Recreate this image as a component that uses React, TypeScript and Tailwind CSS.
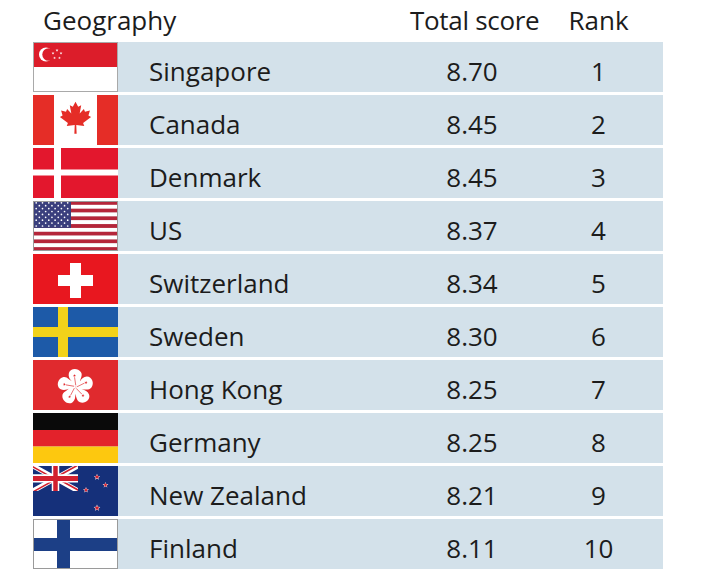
import React from "react"

const starPoints = (cx: number, cy: number, R: number, r: number, rot = -90) => {
    const pts: string[] = []
    for (let i = 0; i < 10; i++) {
        const rad = i % 2 === 0 ? R : r
        const a = ((rot + i * 36) * Math.PI) / 180
        pts.push(`${(cx + rad * Math.cos(a)).toFixed(2)},${(cy + rad * Math.sin(a)).toFixed(2)}`)
    }
    return pts.join(" ")
}

const box = "block w-[85px] h-[50px]"

function Singapore() {
    const stars = [0, 1, 2, 3, 4].map((i) => {
        const a = ((-90 + i * 72) * Math.PI) / 180
        return [24 + 4.2 * Math.cos(a), 12.5 + 4.2 * Math.sin(a)]
    })
    return (
        <svg viewBox="0 0 85 50" className={box} preserveAspectRatio="none">
            <rect width="85" height="50" fill="#fff" />
            <rect width="85" height="25" fill="#dc1d2a" />
            <circle cx="13" cy="12.5" r="7" fill="#fff" />
            <circle cx="15.6" cy="12.5" r="6.3" fill="#dc1d2a" />
            {stars.map(([x, y], i) => (
                <polygon key={i} points={starPoints(x, y, 1.5, 0.6)} fill="#fff" />
            ))}
            <rect x="0.5" y="0.5" width="84" height="49" fill="none" stroke="#a9a9a9" strokeWidth="1" />
        </svg>
    )
}

function Canada() {
    const leaf =
        "50,6 57,19 65,15 61,37 72,25 75,32 88,29 84,42 91,46 70,62 73,70 52,67 53,90 47,90 48,67 27,70 30,62 9,46 16,42 12,29 25,32 28,25 39,37 35,15 43,19"
    return (
        <svg viewBox="0 0 85 50" className={box} preserveAspectRatio="none">
            <rect width="85" height="50" fill="#fff" />
            <rect width="21" height="50" fill="#e52d27" />
            <rect x="64" width="21" height="50" fill="#e52d27" />
            <g transform="translate(23.5 4.5) scale(0.38 0.38)">
                <polygon points={leaf} fill="#e52d27" />
            </g>
        </svg>
    )
}

function Denmark() {
    return (
        <svg viewBox="0 0 85 50" className={box} preserveAspectRatio="none">
            <rect width="85" height="50" fill="#e3172d" />
            <rect x="21" width="7" height="50" fill="#fff" />
            <rect y="21.5" width="85" height="6" fill="#fff" />
        </svg>
    )
}

function US() {
    const stripes = Array.from({ length: 13 }, (_, i) => i)
    const h = 50 / 13
    const dots: [number, number][] = []
    for (let r = 0; r < 9; r++) {
        const cols = r % 2 === 0 ? 6 : 5
        for (let c = 0; c < cols; c++) {
            const x = r % 2 === 0 ? 3.2 + c * 6.3 : 6.35 + c * 6.3
            dots.push([x, 1.8 + r * 2.9])
        }
    }
    return (
        <svg viewBox="0 0 85 50" className={box} preserveAspectRatio="none">
            {stripes.map((i) => (
                <rect key={i} y={i * h} width="85" height={h + 0.1} fill={i % 2 === 0 ? "#b5263a" : "#fff"} />
            ))}
            <rect width="38" height={h * 7} fill="#3a3f7d" />
            {dots.map(([x, y], i) => (
                <circle key={i} cx={x} cy={y} r="0.85" fill="#fff" />
            ))}
            <rect x="0.5" y="0.5" width="84" height="49" fill="none" stroke="#9a9a9a" strokeWidth="1" />
        </svg>
    )
}

function Switzerland() {
    return (
        <svg viewBox="0 0 85 50" className={box} preserveAspectRatio="none">
            <rect width="85" height="50" fill="#e8171f" />
            <rect x="37" y="9" width="11" height="35" fill="#fff" />
            <rect x="25" y="21" width="35" height="11" fill="#fff" />
        </svg>
    )
}

function Sweden() {
    return (
        <svg viewBox="0 0 85 50" className={box} preserveAspectRatio="none">
            <rect width="85" height="50" fill="#1d5aa8" />
            <rect x="25" width="10" height="50" fill="#f2d21a" />
            <rect y="20" width="85" height="10" fill="#f2d21a" />
        </svg>
    )
}

function HongKong() {
    const petal = "M0,0 C-2,-4 -9,-6 -8.5,-12 C-8,-17 -1,-18.5 2.5,-15 C5.5,-12 2.5,-8 3.5,-5 C3.5,-3 1.5,-1 0,0 Z"
    return (
        <svg viewBox="0 0 85 50" className={box} preserveAspectRatio="none">
            <rect width="85" height="50" fill="#e02a2e" />
            <g transform="translate(42.5 27) scale(1.05)">
                {[0, 1, 2, 3, 4].map((i) => (
                    <g key={i} transform={`rotate(${i * 72 + 10})`}>
                        <path d={petal} fill="#fff" />
                        <path d="M0,-1.5 L-2.5,-9" stroke="#e02a2e" strokeWidth="0.6" />
                        <polygon points={starPoints(-2.8, -10.5, 1.5, 0.6)} fill="#e02a2e" />
                    </g>
                ))}
            </g>
        </svg>
    )
}

function Germany() {
    return (
        <svg viewBox="0 0 85 50" className={box} preserveAspectRatio="none">
            <rect width="85" height="17" fill="#0a0a0a" />
            <rect y="17" width="85" height="16.5" fill="#e3222b" />
            <rect y="33.5" width="85" height="16.5" fill="#fdc80f" />
        </svg>
    )
}

function NewZealand() {
    const stars: [number, number, number][] = [
        [64, 11, 2.6],
        [72.5, 19, 2.4],
        [53, 24, 2.4],
        [64, 42, 2.8],
    ]
    return (
        <svg viewBox="0 0 85 50" className={box} preserveAspectRatio="none">
            <defs>
                <clipPath id="nz-s">
                    <path d="M0,0 v30 h60 v-30 z" />
                </clipPath>
                <clipPath id="nz-t">
                    <path d="M30,15 h30 v15 z v15 h-30 z h-30 v-15 z v-15 h30 z" />
                </clipPath>
            </defs>
            <rect width="85" height="50" fill="#15307a" />
            <g transform="scale(0.75 0.83)" clipPath="url(#nz-s)">
                <path d="M0,0 v30 h60 v-30 z" fill="#15307a" />
                <path d="M0,0 L60,30 M60,0 L0,30" stroke="#fff" strokeWidth="6" />
                <path d="M0,0 L60,30 M60,0 L0,30" clipPath="url(#nz-t)" stroke="#d2202f" strokeWidth="4" />
                <path d="M30,0 v30 M0,15 h60" stroke="#fff" strokeWidth="10" />
                <path d="M30,0 v30 M0,15 h60" stroke="#d2202f" strokeWidth="6" />
            </g>
            {stars.map(([x, y, R], i) => (
                <g key={i}>
                    <polygon points={starPoints(x, y, R + 0.7, (R + 0.7) * 0.42)} fill="#fff" />
                    <polygon points={starPoints(x, y, R, R * 0.42)} fill="#d2202f" />
                </g>
            ))}
        </svg>
    )
}

function Finland() {
    return (
        <svg viewBox="0 0 85 50" className={box} preserveAspectRatio="none">
            <rect width="85" height="50" fill="#fff" />
            <rect x="24" width="13" height="50" fill="#1c3f86" />
            <rect y="19" width="85" height="13" fill="#1c3f86" />
            <rect x="0.5" y="0.5" width="84" height="49" fill="none" stroke="#9a9a9a" strokeWidth="1" />
        </svg>
    )
}

const rows = [
    { name: "Singapore", score: "8.70", rank: 1, Flag: Singapore },
    { name: "Canada", score: "8.45", rank: 2, Flag: Canada },
    { name: "Denmark", score: "8.45", rank: 3, Flag: Denmark },
    { name: "US", score: "8.37", rank: 4, Flag: US },
    { name: "Switzerland", score: "8.34", rank: 5, Flag: Switzerland },
    { name: "Sweden", score: "8.30", rank: 6, Flag: Sweden },
    { name: "Hong Kong", score: "8.25", rank: 7, Flag: HongKong },
    { name: "Germany", score: "8.25", rank: 8, Flag: Germany },
    { name: "New Zealand", score: "8.21", rank: 9, Flag: NewZealand },
    { name: "Finland", score: "8.11", rank: 10, Flag: Finland },
]

export default function App() {
    return (
        <div className="min-h-[582px] w-[702px] bg-white pl-[33px] font-['Open_Sans',sans-serif] text-[26px] text-[#1c1c1c]">
            <div className="flex h-[42px] w-[630px] pt-[7px] leading-[26px]">
                <div className="w-[377px] pl-[10px]">Geography</div>
                <div className="w-[124px] whitespace-nowrap text-center tracking-[-0.3px]">Total score</div>
                <div className="w-[129px] text-center">Rank</div>
            </div>

            <div className="flex w-[630px] flex-col gap-[3px]">
                {rows.map(({ name, score, rank, Flag }) => (
                    <div key={name} className="flex h-[50px] bg-[#d3e1ea] leading-[26px]">
                        <div className="w-[85px] shrink-0">
                            <Flag />
                        </div>
                        <div className="flex-1 pl-[31px] pt-[16px]">{name}</div>
                        <div className="w-[124px] pt-[16px] text-center">{score}</div>
                        <div className="w-[129px] pt-[16px] text-center">{rank}</div>
                    </div>
                ))}
            </div>
        </div>
    )
}
